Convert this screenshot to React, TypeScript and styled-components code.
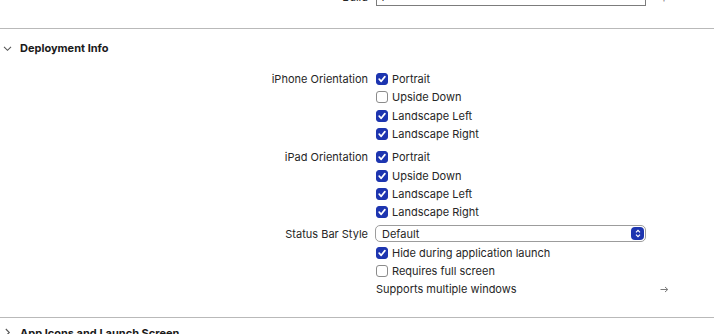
import styled, { createGlobalStyle } from 'styled-components';

const GlobalStyle = createGlobalStyle`
  html, body {
    margin: 0;
    padding: 0;
    background: #ffffff;
    overflow: hidden;
  }
  body {
    font-family: Inter, 'Liberation Sans', sans-serif;
    font-size: 11px;
    color: #262626;
  }
`;

type Row =
  | { kind: 'check'; label?: string; text: string; checked: boolean; gapTop?: number }
  | { kind: 'popup'; label: string; value: string; gapTop?: number }
  | { kind: 'link'; text: string };

const rows: Row[] = [
  { kind: 'check', label: 'iPhone Orientation', text: 'Portrait', checked: true },
  { kind: 'check', text: 'Upside Down', checked: false },
  { kind: 'check', text: 'Landscape Left', checked: true },
  { kind: 'check', text: 'Landscape Right', checked: true },
  { kind: 'check', label: 'iPad Orientation', text: 'Portrait', checked: true, gapTop: 5 },
  { kind: 'check', text: 'Upside Down', checked: true },
  { kind: 'check', text: 'Landscape Left', checked: true },
  { kind: 'check', text: 'Landscape Right', checked: true },
  { kind: 'popup', label: 'Status Bar Style', value: 'Default', gapTop: 3 },
  { kind: 'check', text: 'Hide during application launch', checked: true },
  { kind: 'check', text: 'Requires full screen', checked: false },
  { kind: 'link', text: 'Supports multiple windows' },
];

export default function App() {
  return (
    <>
      <GlobalStyle />
      <Page>
        <TopRow>
          <Label>Build</Label>
          <TextField>1</TextField>
          <Accessory>+</Accessory>
        </TopRow>

        <Divider $top={21} />

        <SectionHeader>
          <svg width='9' height='9' viewBox='0 0 9 9'>
            <path d='M1 2.8 L4.5 6.3 L8 2.8' fill='none' stroke='#555' strokeWidth='1.1' />
          </svg>
          <span>Deployment Info</span>
        </SectionHeader>

        <Form>
          {rows.map((row, i) => {
            if (row.kind === 'popup') {
              return (
                <FormRow key={i} $gapTop={row.gapTop} $height={19}>
                  <Label>{row.label}</Label>
                  <Popup>
                    <span>{row.value}</span>
                    <Stepper>
                      <svg width='6' height='9' viewBox='0 0 6 9'>
                        <path d='M1 3.3 L3 1.3 L5 3.3 M1 5.7 L3 7.7 L5 5.7' fill='none' stroke='#fff' strokeWidth='1.2' />
                      </svg>
                    </Stepper>
                  </Popup>
                  <span />
                </FormRow>
              );
            }
            if (row.kind === 'link') {
              return (
                <FormRow key={i} $height={19}>
                  <Label />
                  <Text>{row.text}</Text>
                  <Accessory>
                    <svg width='9' height='7' viewBox='0 0 9 7'>
                      <path d='M0.5 3.5 H7.5 M5 1 L7.8 3.5 L5 6' fill='none' stroke='#7a7a7a' strokeWidth='1' />
                    </svg>
                  </Accessory>
                </FormRow>
              );
            }
            return (
              <FormRow key={i} $gapTop={row.gapTop} $height={18.3}>
                <Label>{row.label}</Label>
                <CheckItem>
                  <Box $checked={row.checked}>
                    {row.checked && (
                      <svg width='10' height='10' viewBox='0 0 10 10'>
                        <path d='M2.2 5.2 L4.2 7.3 L7.9 2.6' fill='none' stroke='#fff' strokeWidth='1.7' strokeLinecap='round' strokeLinejoin='round' />
                      </svg>
                    )}
                  </Box>
                  <Text>{row.text}</Text>
                </CheckItem>
                <span />
              </FormRow>
            );
          })}
        </Form>

        <Divider $top={18} />

        <SectionHeader $top={6}>
          <svg width='9' height='9' viewBox='0 0 9 9'>
            <path d='M2.8 1 L6.3 4.5 L2.8 8' fill='none' stroke='#555' strokeWidth='1.1' />
          </svg>
          <span>App Icons and Launch Screen</span>
        </SectionHeader>
      </Page>
    </>
  );
}

const Page = styled.div`
  margin-top: -13px;
  width: 714px;
`;

const grid = `
  display: grid;
  grid-template-columns: 368px 270px 1fr;
  column-gap: 8px;
  align-items: center;
`;

const TopRow = styled.div`
  ${grid}
  height: 20px;
`;

const Label = styled.span`
  text-align: right;
  color: #262626;
  white-space: nowrap;
`;

const TextField = styled.div`
  height: 17px;
  box-sizing: border-box;
  border: 1px solid #7c7c7c;
  background: #fff;
  padding: 0 3px;
  line-height: 15px;
`;

const Accessory = styled.span`
  display: flex;
  align-items: center;
  padding-left: 6px;
  color: #8a8a8a;
  font-size: 12px;
`;

const Divider = styled.div<{ $top?: number }>`
  height: 1px;
  background: #b9b9b9;
  margin-top: ${(p) => p.$top ?? 8}px;
`;

const SectionHeader = styled.div<{ $top?: number }>`
  display: flex;
  align-items: center;
  gap: 8px;
  height: 18px;
  margin-top: ${(p) => p.$top ?? 10}px;
  padding-left: 3px;
  font-weight: 700;
  color: #1a1a1a;
`;

const Form = styled.div`
  display: flex;
  flex-direction: column;
  margin-top: 13px;
`;

const FormRow = styled.div<{ $gapTop?: number; $height: number }>`
  ${grid}
  height: ${(p) => p.$height}px;
  margin-top: ${(p) => p.$gapTop ?? 0}px;
`;

const CheckItem = styled.label`
  display: flex;
  align-items: center;
  gap: 4px;
`;

const Box = styled.span<{ $checked: boolean }>`
  width: 12px;
  height: 12px;
  box-sizing: border-box;
  border-radius: 3px;
  display: flex;
  align-items: center;
  justify-content: center;
  background: ${(p) => (p.$checked ? '#1d35b0' : '#ffffff')};
  border: 1px solid ${(p) => (p.$checked ? '#1d35b0' : '#8b8b8b')};
`;

const Text = styled.span`
  color: #262626;
  white-space: nowrap;
`;

const Popup = styled.div`
  height: 17px;
  box-sizing: border-box;
  border: 1px solid #9c9c9c;
  border-radius: 5px;
  display: flex;
  align-items: center;
  justify-content: space-between;
  padding: 0 1px 0 6px;
  background: #fff;
  margin-left: -1px;
`;

const Stepper = styled.span`
  width: 13px;
  height: 13px;
  border-radius: 4px;
  background: #1d35b0;
  display: flex;
  align-items: center;
  justify-content: center;
`;
